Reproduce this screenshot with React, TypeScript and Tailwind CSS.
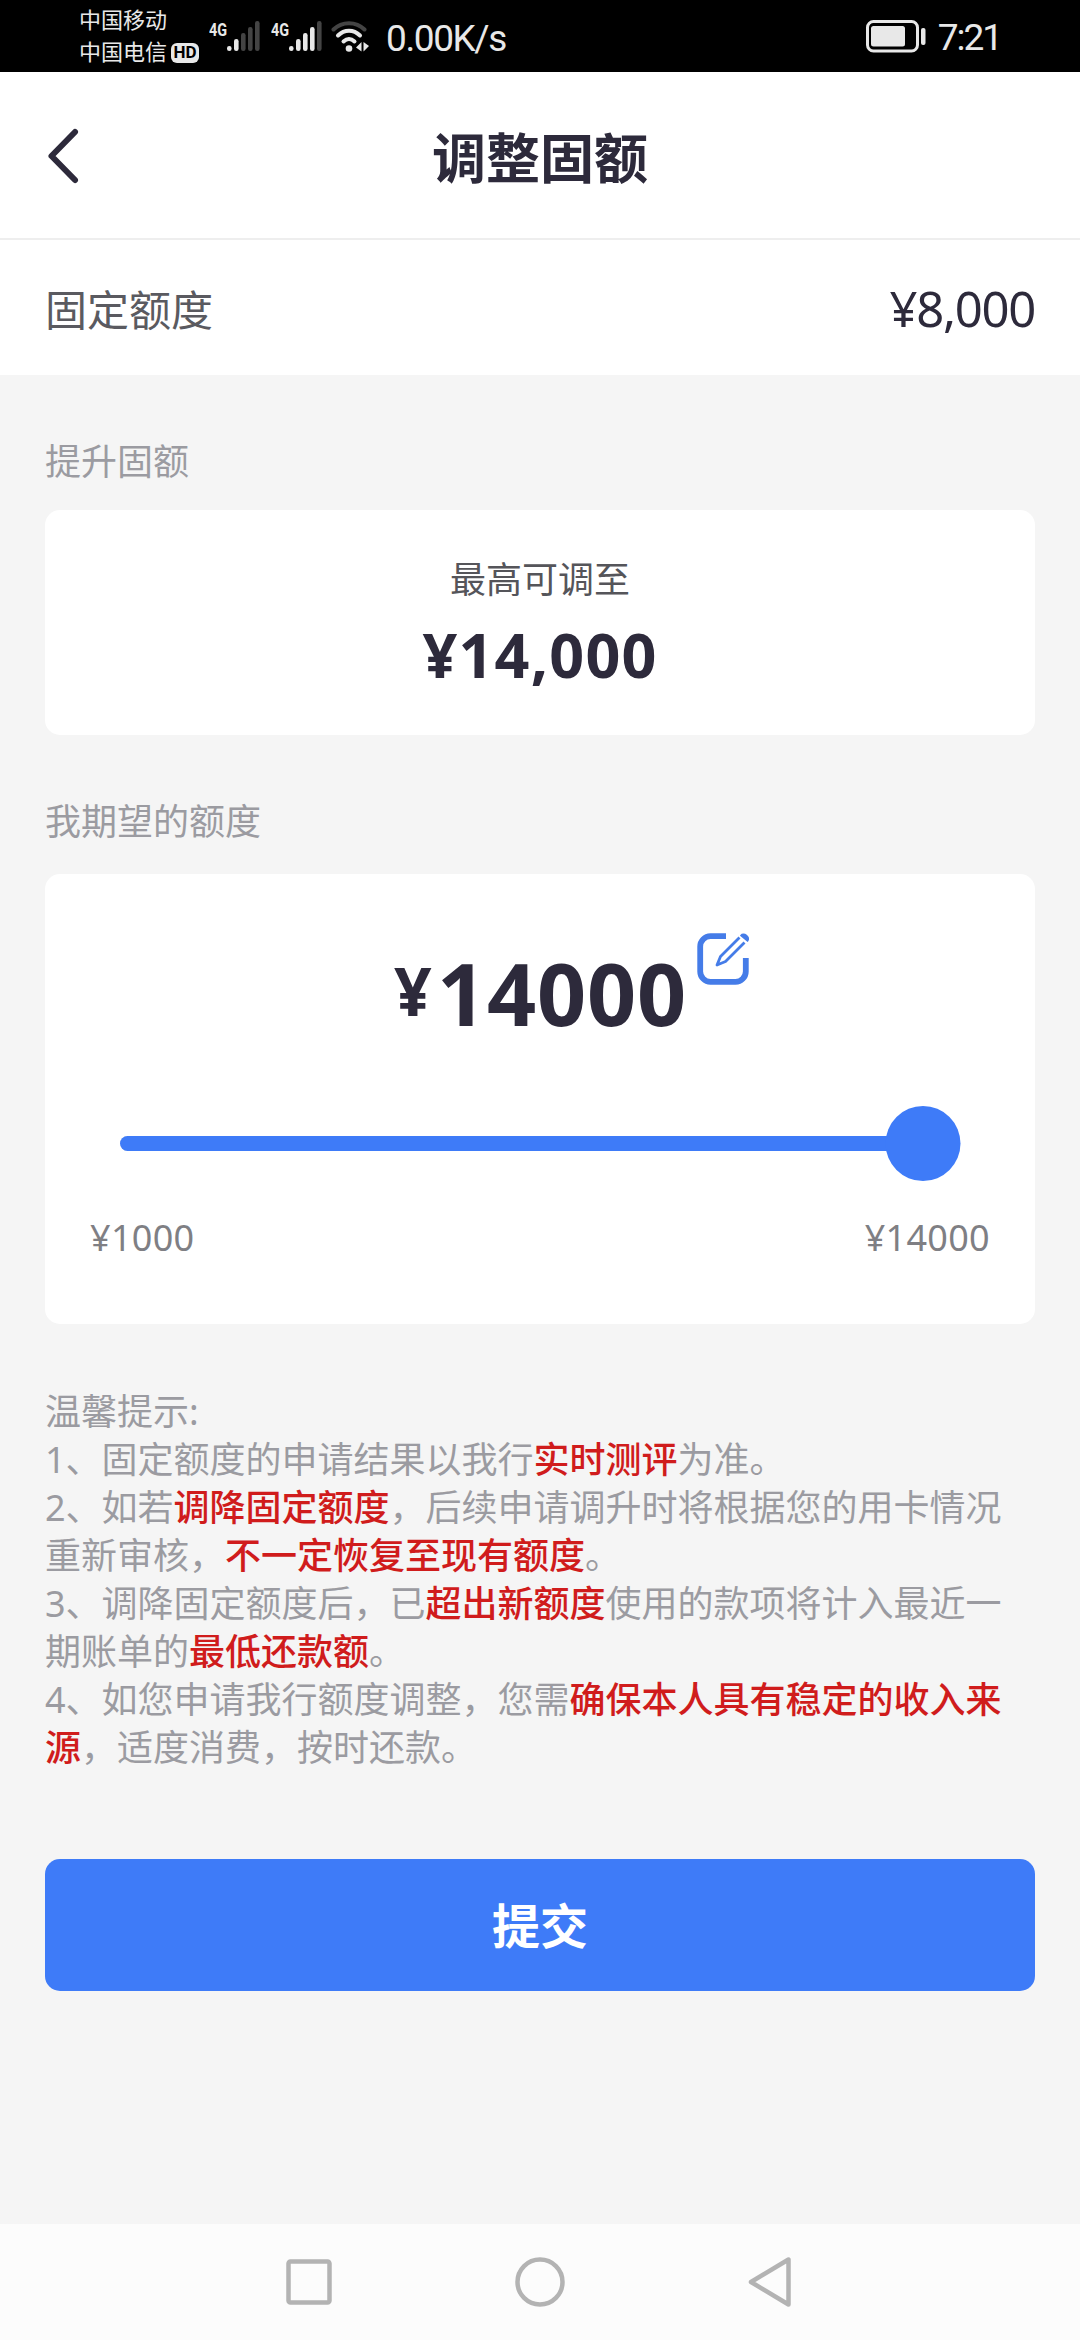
import React, { useState } from "react";
import * as Slider from "@radix-ui/react-slider";

const MIN_LIMIT = 1000;
const MAX_LIMIT = 14000;

interface SignalProps {
  level: number;
}

function Signal({ level }: SignalProps) {
  const heights = [5, 12, 18, 24, 30];

  return (
    <div className="flex items-start">
      <span className="w-[18px] origin-top-left scale-x-[0.8] font-['Roboto',sans-serif] text-[18px] leading-none font-bold text-[#e8e8e8]">
        4G
      </span>
      <svg width="33" height="30" viewBox="0 0 33 30">
        {heights.map((h, i) => (
          <rect
            key={h}
            x={i * 7}
            y={30 - h}
            width="4.6"
            height={h}
            rx="2.2"
            fill={i < level ? "#e8e8e8" : "#444444"}
          />
        ))}
      </svg>
    </div>
  );
}

function WifiIcon() {
  return (
    <svg className="-ml-[2px]" width="38" height="32" viewBox="0 0 38 32" fill="none" strokeLinecap="round">
      <path d="M2.5 8.5C11 0 25 0 33.5 8.5" stroke="#444444" strokeWidth="4" />
      <path d="M7 14.5c6.500-6.500 15.500-6.500 22 0" stroke="#e8e8e8" strokeWidth="4" />
      <path d="M12.500 20.500c3.500-3.200 7.500-3.200 11 0" stroke="#e8e8e8" strokeWidth="4" />
      <circle cx="18" cy="27.500" r="3.300" fill="#e8e8e8" />
      <path d="M30.500 21v9.500L25 26.500zM32.500 21v9.500L38 25z" fill="#e8e8e8" />
    </svg>
  );
}

function StatusBar() {
  return (
    <div className="flex h-[72px] bg-black pl-[79px] text-[#e8e8e8]">
      <div className="w-[130px] pt-[3px] text-[22px] leading-[32px]">
        <div>中国移动</div>
        <div className="flex items-center">
          中国电信
          <span className="mt-[3px] ml-[4px] flex h-[20px] w-[28px] items-center justify-center rounded-[6px] bg-[#e8e8e8] font-['Roboto',sans-serif] text-[17px] leading-none font-bold text-black">
            HD
          </span>
        </div>
      </div>
      <div className="flex gap-[11px] pt-[21px]">
        <Signal level={2} />
        <Signal level={4} />
        <WifiIcon />
      </div>
      <div className="ml-[17px] font-['Roboto',sans-serif] text-[37px] leading-[78px] tracking-[-1.400px]">0.00K/s</div>
      <svg className="mt-[20px] ml-auto" width="60" height="33" viewBox="0 0 60 33">
        <rect x="1.500" y="1.500" width="50" height="29.500" rx="6" fill="none" stroke="#e8e8e8" strokeWidth="3" />
        <rect x="5" y="6" width="34" height="20.500" rx="2.500" fill="#e8e8e8" />
        <rect x="55" y="8" width="4.500" height="17" rx="2" fill="#e8e8e8" />
      </svg>
      <div className="mr-[79px] ml-[12px] font-['Roboto',sans-serif] text-[37px] leading-[76px] tracking-[-2px]">7:21</div>
    </div>
  );
}

function EditIcon() {
  return (
    <svg width="52" height="52" viewBox="0 0 52 52" fill="none" stroke="#457ce8">
      <path d="M29 3.200H13.500A10.300 10.300 0 0 0 3.200 13.500V38.500A10.300 10.300 0 0 0 13.500 48.800H38.500A10.300 10.300 0 0 0 48.800 38.500V25" strokeWidth="5.800" />
      <path d="M42.500 4.500 23.500 23.500 20 32l8.500-3.500L47.500 9.500" strokeWidth="2.800" strokeLinejoin="round" />
      <path d="M44 2.500c2.500-3.500 9.500 1.500 6.500 5.500z" fill="#457ce8" strokeWidth="1.500" />
    </svg>
  );
}

function Warn({ children }: { children: React.ReactNode }) {
  return <span className="font-medium text-[#d01c1c]">{children}</span>;
}

export default function App() {
  const [amount, setAmount] = useState(MAX_LIMIT);

  return (
    <div className="flex h-[2340px] w-[1080px] flex-col bg-[#f5f5f5] font-['Noto_Sans','Noto_Sans_CJK_SC',sans-serif] text-[#2d2a3b]">
      <StatusBar />

      <header className="grid h-[168px] grid-cols-[1fr_auto_1fr] items-center border-b-2 border-[#eeeeee] bg-white px-[45px]">
        <svg width="36" height="60" viewBox="0 0 36 60" fill="none" stroke="currentColor" strokeWidth="6" strokeLinecap="round" strokeLinejoin="round">
          <path d="M30 7 6.500 31 30 55" />
        </svg>
        <h1 className="pt-[6px] text-[54px] leading-none font-bold">调整固额</h1>
      </header>

      <div className="flex h-[135px] items-center justify-between bg-white px-[45px] pt-[3px]">
        <span className="text-[42px] text-[#5a5a60]">固定额度</span>
        <span className="text-[49px] tracking-[-1.300px]">¥8,000</span>
      </div>

      <main className="flex flex-1 flex-col px-[45px] text-[36px] leading-[48px]">
        <h2 className="mt-[63px] text-[#9b9ba1]">提升固额</h2>
        <section className="mt-[24px] flex h-[225px] flex-col items-center rounded-[15px] bg-white pt-[46px]">
          <p className="text-[#55555a]">最高可调至</p>
          <p className="mt-[11px] text-[61px] leading-[80px] font-bold tracking-[1.200px]">¥14,000</p>
        </section>

        <h2 className="mt-[63px] text-[#9b9ba1]">我期望的额度</h2>
        <section className="mt-[28px] h-[450px] rounded-[15px] bg-white pt-[59px]">
          <div className="flex h-[120px] pl-[349px]">
            <span className="w-[43px] text-[66px] leading-[114px] font-bold">¥</span>
            <span className="text-[86px] leading-[120px] font-bold tracking-[0.800px]">{amount}</span>
            <button className="ml-[10px] self-start">
              <EditIcon />
            </button>
          </div>
          <Slider.Root
            className="relative mx-[75px] mt-[53px] flex h-[75px] items-center"
            min={MIN_LIMIT}
            max={MAX_LIMIT}
            step={1000}
            value={[amount]}
            onValueChange={([value]) => setAmount(value)}
          >
            <Slider.Track className="relative h-[15px] grow overflow-hidden rounded-full bg-[#e5e5e5]">
              <Slider.Range className="absolute h-full bg-[#3e7bf8]" />
            </Slider.Track>
            <Slider.Thumb className="block h-[75px] w-[75px] rounded-full bg-[#3e7bf8] outline-none" />
          </Slider.Root>
          <div className="mt-[33px] flex justify-between px-[45px] tracking-[0.300px] text-[#7f7f84]">
            <span>¥{MIN_LIMIT}</span>
            <span>¥{MAX_LIMIT}</span>
          </div>
        </section>

        <div className="mt-[64px] text-[#9b9ba1]">
          <p>温馨提示:</p>
          <p>
            1、固定额度的申请结果以我行<Warn>实时测评</Warn>为准。
          </p>
          <p>
            2、如若<Warn>调降固定额度</Warn>，后续申请调升时将根据您的用卡情况重新审核，<Warn>不一定恢复至现有额度</Warn>。
          </p>
          <p>
            3、调降固定额度后，已<Warn>超出新额度</Warn>使用的款项将计入最近一期账单的<Warn>最低还款额</Warn>。
          </p>
          <p>
            4、如您申请我行额度调整，您需<Warn>确保本人具有稳定的收入来源</Warn>，适度消费，按时还款。
          </p>
        </div>

        <button className="mt-[87px] h-[132px] rounded-[15px] bg-[#3e7bf8] pt-[2px] text-[48px] font-bold text-white">
          提交
        </button>
      </main>

      <nav className="flex h-[116px] items-center justify-center gap-[181px] bg-[#fcfcfc]">
        <svg width="50" height="52" viewBox="0 0 50 52" fill="none" stroke="#b3b3b3" strokeWidth="4.500">
          <rect x="4.500" y="5.500" width="41" height="41" rx="2" />
        </svg>
        <svg width="50" height="52" viewBox="0 0 50 52" fill="none" stroke="#b3b3b3" strokeWidth="4.500">
          <circle cx="25" cy="26" r="22.500" />
        </svg>
        <svg width="50" height="52" viewBox="0 0 50 52" fill="none" stroke="#b3b3b3" strokeWidth="4.500" strokeLinejoin="round">
          <path d="M42.500 3.500v45L5 26z" />
        </svg>
      </nav>
    </div>
  );
}
